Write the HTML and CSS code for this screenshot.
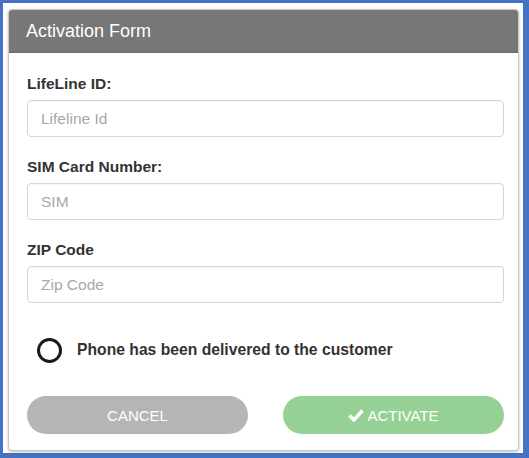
FILE: index.html
```html
<!DOCTYPE html>
<html>
<head>
<meta charset="utf-8">
<link rel="stylesheet" href="styles.css">
</head>
<body>
<div class="frame">
  <div class="panel">
    <div class="panel-header">Activation Form</div>
    <div class="panel-body">
      <div class="group">
        <label class="label">LifeLine ID:</label>
        <input class="input" type="text" placeholder="Lifeline Id">
      </div>
      <div class="group">
        <label class="label">SIM Card Number:</label>
        <input class="input" type="text" placeholder="SIM">
      </div>
      <div class="group">
        <label class="label">ZIP Code</label>
        <input class="input" type="text" placeholder="Zip Code">
      </div>
      <div class="check-row">
        <span class="radio"></span>
        <span class="check-text">Phone has been delivered to the customer</span>
      </div>
      <div class="actions">
        <button class="btn btn-cancel">CANCEL</button>
        <button class="btn btn-activate"><svg class="check" viewBox="0 0 16 16" width="16" height="16"><path d="M1.5 8.5 L6 13 L14.5 3.5" fill="none" stroke="#fff" stroke-width="3.4" stroke-linejoin="miter"/></svg>ACTIVATE</button>
      </div>
    </div>
  </div>
</div>
</body>
</html>
```

FILE: styles.css
```css
* { box-sizing: border-box; }
html, body { margin: 0; padding: 0; background: #fff; }
body { font-family: "Liberation Sans", Arial, sans-serif; }

.frame {
  width: 529px;
  height: 458px;
  border-style: solid;
  border-color: #4472c4;
  border-width: 3px 6px 5px 3px;
  padding: 6px 4px 2px 5px;
  background: #fff;
}

.panel {
  height: 100%;
  border: 1px solid #c8c8c8;
  border-radius: 4px;
  box-shadow: 0 1px 3px rgba(0,0,0,0.25);
  overflow: hidden;
  background: #fff;
}

.panel-header {
  height: 43px;
  background: #777;
  color: #fff;
  font-size: 18px;
  line-height: 43px;
  padding-left: 17px;
  border-bottom: 1px solid #6a6a6a;
}

.panel-body {
  padding: 23px 14px 0 18px;
}

.group {
  display: flex;
  flex-direction: column;
  margin-bottom: 22px;
}

.label {
  font-size: 15.5px;
  font-weight: bold;
  color: #333;
  line-height: 16px;
  margin-bottom: 8px;
}

.input {
  height: 37px;
  border: 1px solid #d6d6d6;
  border-radius: 4px;
  padding: 0 13px;
  font-family: "Liberation Sans", Arial, sans-serif;
  font-size: 15.5px;
  color: #555;
  background: #fff;
  box-shadow: inset 0 1px 1px rgba(0,0,0,0.04);
}
.input::placeholder { color: #a8a8a8; }

.check-row {
  display: flex;
  align-items: center;
  margin-top: 34px;
  padding-left: 10px;
  height: 26px;
}

.radio {
  width: 25px;
  height: 25px;
  border: 3px solid #1a1a1a;
  border-radius: 50%;
  margin-right: 15px;
  flex: none;
}

.check-text {
  font-size: 15.7px;
  font-weight: bold;
  color: #333;
}

.actions {
  display: flex;
  gap: 35px;
  margin-top: 33px;
}

.btn {
  flex: 1;
  height: 38px;
  border: none;
  border-radius: 19px;
  color: #fff;
  font-family: "Liberation Sans", Arial, sans-serif;
  font-size: 15px;
  display: flex;
  align-items: center;
  justify-content: center;
  padding: 0;
}

.btn-cancel { background: #b5b5b5; }
.btn-activate { background: #95d195; }

.check { margin-right: 3px; }
```
